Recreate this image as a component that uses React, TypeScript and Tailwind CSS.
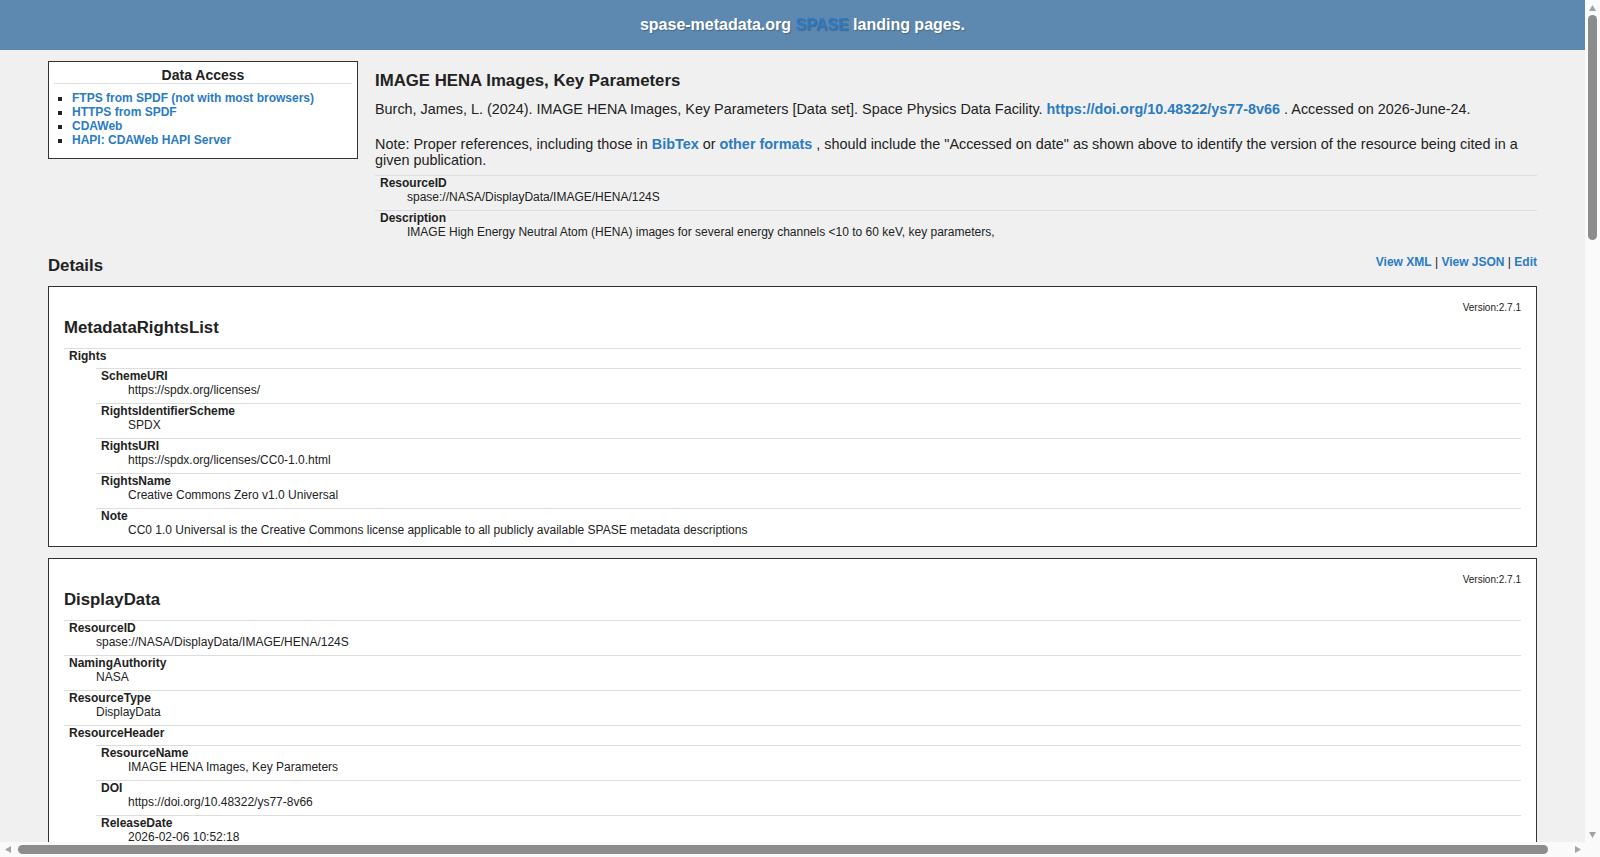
import React from 'react';

type Entry = { name: string; value?: string; children?: Entry[] };

const rightsList: Entry[] = [
  {
    name: 'Rights',
    children: [
      { name: 'SchemeURI', value: 'https://spdx.org/licenses/' },
      { name: 'RightsIdentifierScheme', value: 'SPDX' },
      { name: 'RightsURI', value: 'https://spdx.org/licenses/CC0-1.0.html' },
      { name: 'RightsName', value: 'Creative Commons Zero v1.0 Universal' },
      { name: 'Note', value: 'CC0 1.0 Universal is the Creative Commons license applicable to all publicly available SPASE metadata descriptions' },
    ],
  },
];

const access = (name: string, url: string): Entry => ({
  name: 'AccessInformation',
  children: [
    { name: 'RepositoryID', value: 'spase://SMWG/Repository/NASA/GSFC/SPDF' },
    { name: 'Availability', value: 'Online' },
    { name: 'AccessRights', value: 'Open' },
    { name: 'AccessURL', children: [{ name: 'Name', value: name }, { name: 'URL', value: url }] },
    { name: 'Format', value: 'CDF' },
  ],
});

const displayData: Entry[] = [
  { name: 'ResourceID', value: 'spase://NASA/DisplayData/IMAGE/HENA/124S' },
  { name: 'NamingAuthority', value: 'NASA' },
  { name: 'ResourceType', value: 'DisplayData' },
  {
    name: 'ResourceHeader',
    children: [
      { name: 'ResourceName', value: 'IMAGE HENA Images, Key Parameters' },
      { name: 'DOI', value: 'https://doi.org/10.48322/ys77-8v66' },
      { name: 'ReleaseDate', value: '2026-02-06 10:52:18' },
      {
        name: 'RevisionHistory',
        children: [
          { name: 'RevisionEvent', children: [{ name: 'ReleaseDate', value: '2024-06-13 15:37:04' }, { name: 'Note', value: 'Added DOI' }] },
        ],
      },
      { name: 'Description', value: 'IMAGE High Energy Neutral Atom (HENA) images for several energy channels <10 to 60 keV, key parameters,' },
      { name: 'Acknowledgement', value: 'Please acknowledge the Principal Investigator, James L. Burch, of the Southwest Research Institute' },
      {
        name: 'PublicationInfo',
        children: [
          { name: 'Authors', value: 'Burch, James, L.' },
          { name: 'PublicationDate', value: '2024-01-01 00:00:00' },
          { name: 'PublishedBy', value: 'Space Physics Data Facility' },
        ],
      },
      { name: 'Contact', children: [{ name: 'PersonID', value: 'spase://SMWG/Person/James.L.Burch' }, { name: 'Role', value: 'PrincipalInvestigator' }] },
      { name: 'Contact', children: [{ name: 'PersonID', value: 'spase://SMWG/Person/Donald.G.Mitchell' }, { name: 'Role', value: 'CoInvestigator' }] },
      { name: 'Contact', children: [{ name: 'PersonID', value: 'spase://SMWG/Person/Robert.M.Candey' }, { name: 'Role', value: 'MetadataContact' }] },
      {
        name: 'InformationURL',
        children: [
          { name: 'Name', value: 'CDAWeb' },
          { name: 'URL', value: 'https://cdaweb.gsfc.nasa.gov/misc/NotesI.html#IM_K0_HENA' },
          { name: 'Description', value: 'Information about the IMAGE HENA Key Parameters' },
        ],
      },
      { name: 'PriorID', value: 'spase://VSPO/DisplayData/IMAGE/HENA/PT124S' },
    ],
  },
  access('FTPS from SPDF (not with most browsers)', 'ftps://spdf.gsfc.nasa.gov/pub/data/image/hena/'),
  access('HTTPS from SPDF', 'https://spdf.gsfc.nasa.gov/pub/data/image/hena/'),
  access('CDAWeb', 'https://cdaweb.gsfc.nasa.gov/cgi-bin/eval2.cgi?dataset=IM_K0_HENA&index=sp_phys'),
  { name: 'ProcessingLevel', value: 'Calibrated' },
  { name: 'InstrumentID', value: 'spase://SMWG/Instrument/IMAGE/HENA' },
  { name: 'MeasurementType', value: 'EnergeticParticles' },
  {
    name: 'TemporalDescription',
    children: [
      { name: 'TimeSpan', children: [{ name: 'StartDate', value: '2000-05-08 00:00:00' }, { name: 'StopDate', value: '2005-12-18 23:59:59' }] },
      { name: 'Cadence', value: 'PT124S' },
    ],
  },
  { name: 'DisplayCadence', value: 'PT124S' },
  { name: 'ObservedRegion', value: 'Earth.Magnetosphere' },
  { name: 'ObservedRegion', value: 'Earth.Magnetosphere.RingCurrent' },
  { name: 'Keyword', value: 'Energetic Neutral Atoms' },
];

const Rows: React.FC<{ items: Entry[] }> = ({ items }) => (
  <dl>
    {items.map((it, i) => (
      <div key={i}>
        <dt className="border-t border-[#dddddd] pl-[5px] font-bold">{it.name}</dt>
        {it.children ? (
          <dd className="ml-[32px] pt-[5px]">
            <Rows items={it.children} />
          </dd>
        ) : (
          <dd className="ml-[32px] pb-[6px]">{it.value}</dd>
        )}
      </div>
    ))}
  </dl>
);

const Section: React.FC<{ title: string; items: Entry[] }> = ({ title, items }) => (
  <div className="border border-[#333333] bg-white px-[15px] pt-[15px] pb-[3px]">
    <div className="text-right text-[10px] leading-[12px]">Version:2.7.1</div>
    <h3 className="mt-[4px] text-[16.8px] font-bold leading-[20px]">{title}</h3>
    <div className="mt-[10px] text-[12px] leading-[14px]">
      <Rows items={items} />
    </div>
  </div>
);

const link = 'font-bold text-[#2b7bc3]';

// small scrollbar arrow triangle
const Arrow: React.FC<{ dir: 'up' | 'down' | 'left' | 'right' }> = ({ dir }) => {
  const pts = {
    up: '0,6 3.5,0 7,6',
    down: '0,0 7,0 3.5,6',
    left: '6,0 6,7 0,3.5',
    right: '0,0 6,3.5 0,7',
  }[dir];
  const vertical = dir === 'up' || dir === 'down';
  return (
    <svg width={vertical ? 7 : 6} height={vertical ? 6 : 7} viewBox={vertical ? '0 0 7 6' : '0 0 6 7'}>
      <polygon points={pts} fill="#a3a3a3" />
    </svg>
  );
};

export default function App() {
  return (
    <div className="flex h-screen flex-col overflow-hidden bg-[#fafafa] text-[#222222] [font-family:'Liberation_Sans',Arial,sans-serif]">
      <div className="flex min-h-0 flex-1">
        <div className="min-w-0 flex-1 overflow-hidden bg-[#f0f0f0]">
          <header className="box-content h-[30px] w-full bg-[#5d89b0] px-[10px] py-[10px] text-center text-[16px] font-bold leading-[30px] text-white [text-shadow:1px_1px_1px_rgba(0,0,0,0.25)]">
            spase-metadata.org <span className="text-[#2e78c4]">SPASE</span> landing pages.
          </header>

          <div className="mx-[48px] pb-[40px]">
            <div className="mt-[11px] flex items-start">
              {/* access links */}
              <div className="w-[310px] shrink-0 border border-[#333333] bg-white px-[5px] pt-[5px]">
                <h4 className="border-b border-[#dddddd] text-center text-[14px] font-bold leading-[16px]">Data Access</h4>
                <ul className="mt-[7px] mb-[11px] list-[square] pl-[18px] text-[12px] leading-[14px]">
                  <li><a className={link}>FTPS from SPDF (not with most browsers)</a></li>
                  <li><a className={link}>HTTPS from SPDF</a></li>
                  <li><a className={link}>CDAWeb</a></li>
                  <li><a className={link}>HAPI: CDAWeb HAPI Server</a></li>
                </ul>
              </div>

              {/* citation */}
              <div className="ml-[17px] flex-1">
                <h2 className="mt-[10px] text-[16.8px] font-bold leading-[20px]">IMAGE HENA Images, Key Parameters</h2>
                <p className="mt-[10px] text-[14.4px] leading-[16px]">
                  Burch, James, L. (2024). IMAGE HENA Images, Key Parameters [Data set]. Space Physics Data Facility.{' '}
                  <a className={link}>https://doi.org/10.48322/ys77-8v66</a> . Accessed on 2026-June-24.
                </p>
                <p className="mt-[19px] text-[14.4px] leading-[16px]">
                  Note: Proper references, including those in <a className={link}>BibTex</a> or{' '}
                  <a className={link}>other formats</a> , should include the "Accessed on date" as shown above to identify the
                  version of the resource being cited in a given publication.
                </p>
                <div className="mt-[7px] text-[12px] leading-[14px]">
                  <Rows
                    items={[
                      { name: 'ResourceID', value: 'spase://NASA/DisplayData/IMAGE/HENA/124S' },
                      { name: 'Description', value: 'IMAGE High Energy Neutral Atom (HENA) images for several energy channels <10 to 60 keV, key parameters,' },
                    ]}
                  />
                </div>
              </div>
            </div>

            <div className="mt-[10px] flex items-start justify-between">
              <h2 className="mt-[1px] text-[16.8px] font-bold leading-[20px]">Details</h2>
              <div className="text-[12px] leading-[14px]">
                <a className={link}>View XML</a> | <a className={link}>View JSON</a> | <a className={link}>Edit</a>
              </div>
            </div>

            <div className="mt-[10px] flex flex-col gap-[11px]">
              <Section title="MetadataRightsList" items={rightsList} />
              <Section title="DisplayData" items={displayData} />
            </div>
          </div>
        </div>

        {/* vertical scrollbar */}
        <div className="flex w-[15px] shrink-0 flex-col items-center bg-[#fafafa]">
          <div className="flex h-[15px] items-center justify-center"><Arrow dir="up" /></div>
          <div className="w-full flex-1 px-[3px]">
            <div className="h-[225px] rounded-full bg-[#8c8c8c]" />
          </div>
          <div className="flex h-[15px] items-center justify-center"><Arrow dir="down" /></div>
        </div>
      </div>

      {/* horizontal scrollbar */}
      <div className="flex h-[15px] shrink-0">
        <div className="flex min-w-0 flex-1 items-center bg-[#fafafa]">
          <div className="flex w-[15px] justify-center"><Arrow dir="left" /></div>
          <div className="flex-1 py-[3px] pl-[3px] pr-[22px]">
            <div className="h-[9px] rounded-full bg-[#8c8c8c]" />
          </div>
          <div className="flex w-[15px] justify-center"><Arrow dir="right" /></div>
        </div>
        <div className="w-[15px] bg-[#fafafa]" />
      </div>
    </div>
  );
}
